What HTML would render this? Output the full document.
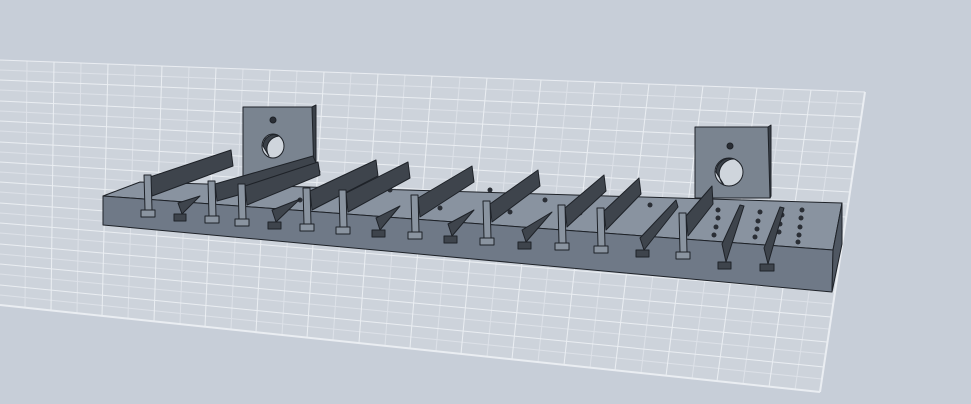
<!DOCTYPE html>
<html><head><meta charset="utf-8"><style>
html,body{margin:0;padding:0;background:#c7ced8;}
svg{display:block}
</style></head><body>
<svg width="971" height="404" viewBox="0 0 971 404" xmlns="http://www.w3.org/2000/svg">
<rect width="971" height="404" fill="#c7ced8"/>
<polygon points="0,60 865,92 820,392 0,305" fill="#cdd3db"/>
<g stroke="#e4e8ee" stroke-width="1" opacity="0.7">
<line x1="0" y1="70" x2="863" y2="104"/><line x1="0" y1="90" x2="859" y2="129"/>
<line x1="0" y1="111" x2="855" y2="154"/><line x1="0" y1="131" x2="852" y2="179"/>
<line x1="0" y1="152" x2="848" y2="204"/><line x1="0" y1="172" x2="844" y2="229"/>
<line x1="0" y1="192" x2="840" y2="254"/><line x1="0" y1="213" x2="837" y2="279"/>
<line x1="0" y1="233" x2="833" y2="304"/><line x1="0" y1="254" x2="829" y2="329"/>
<line x1="0" y1="274" x2="825" y2="354"/><line x1="0" y1="295" x2="822" y2="379"/>
<line x1="27" y1="61" x2="25" y2="307"/><line x1="81" y1="63" x2="77" y2="313"/>
<line x1="135" y1="65" x2="128" y2="318"/><line x1="189" y1="67" x2="180" y2="324"/>
<line x1="243" y1="69" x2="231" y2="329"/><line x1="297" y1="71" x2="282" y2="335"/>
<line x1="351" y1="73" x2="333" y2="340"/><line x1="405" y1="75" x2="385" y2="346"/>
<line x1="460" y1="77" x2="436" y2="351"/><line x1="514" y1="79" x2="487" y2="357"/>
<line x1="568" y1="81" x2="538" y2="362"/><line x1="622" y1="83" x2="590" y2="368"/>
<line x1="676" y1="85" x2="641" y2="373"/><line x1="730" y1="87" x2="692" y2="379"/>
<line x1="784" y1="89" x2="743" y2="384"/><line x1="838" y1="91" x2="795" y2="390"/>
</g>
<g stroke="#eef1f5" stroke-width="1" opacity="0.9">
<line x1="0" y1="60" x2="865" y2="92"/><line x1="0" y1="80" x2="861" y2="117"/>
<line x1="0" y1="101" x2="857" y2="142"/><line x1="0" y1="121" x2="854" y2="167"/>
<line x1="0" y1="142" x2="850" y2="192"/><line x1="0" y1="162" x2="846" y2="217"/>
<line x1="0" y1="182" x2="842" y2="242"/><line x1="0" y1="203" x2="839" y2="267"/>
<line x1="0" y1="223" x2="835" y2="292"/><line x1="0" y1="244" x2="831" y2="317"/>
<line x1="0" y1="264" x2="827" y2="342"/><line x1="0" y1="285" x2="824" y2="367"/>
<line x1="0" y1="305" x2="820" y2="392" stroke-width="2"/>
<line x1="54" y1="62" x2="51" y2="310"/><line x1="108" y1="64" x2="102" y2="316"/>
<line x1="162" y1="66" x2="154" y2="321"/><line x1="216" y1="68" x2="205" y2="327"/>
<line x1="270" y1="70" x2="256" y2="332"/><line x1="324" y1="72" x2="307" y2="338"/>
<line x1="378" y1="74" x2="359" y2="343"/><line x1="432" y1="76" x2="410" y2="348"/>
<line x1="487" y1="78" x2="461" y2="354"/><line x1="541" y1="80" x2="512" y2="359"/>
<line x1="595" y1="82" x2="564" y2="365"/><line x1="649" y1="84" x2="615" y2="370"/>
<line x1="703" y1="86" x2="666" y2="376"/><line x1="757" y1="88" x2="717" y2="381"/>
<line x1="811" y1="90" x2="769" y2="387"/><line x1="865" y1="92" x2="820" y2="392" stroke-width="2"/>
</g>
<g stroke="#1e2228" stroke-width="1" stroke-linejoin="round">
<polygon points="243,107 312,107 314,110 314,176 243,176" fill="#7a8490"/>
<polygon points="312,107 316,105 316,174 314,176" fill="#3a4048"/>
<circle cx="273" cy="120" r="3" fill="#2a2e35"/>
<ellipse cx="273" cy="146" rx="11" ry="12" fill="#cfd5dc"/>
<path d="M263,146 a11,12 0 0 1 16,-10 a13,13 0 0 0 -10,20 z" fill="#3a4048"/>
<polygon points="695,127 768,127 770,130 770,198 695,198" fill="#7a8490"/>
<polygon points="768,127 771,125 771,196 770,198" fill="#3a4048"/>
<circle cx="730" cy="146" r="3" fill="#2a2e35"/>
<ellipse cx="729" cy="172" rx="14" ry="14" fill="#cfd5dc"/>
<path d="M716,172 a14,14 0 0 1 18,-13 a15,15 0 0 0 -10,26 z" fill="#3a4048"/>
<polygon points="103,196 140,182 842,203 833,250" fill="#8993a0"/>
<polygon points="103,196 833,250 832,292 103,225" fill="#6f7987"/>
<polygon points="833,250 842,203 842,244 832,292" fill="#4f5762"/>
</g>
<g fill="#2a2e35">
<circle cx="300" cy="200" r="2.5"/><circle cx="390" cy="190" r="2.5"/><circle cx="420" cy="201" r="2.5"/>
<circle cx="440" cy="208" r="2.5"/><circle cx="490" cy="190" r="2.5"/><circle cx="510" cy="212" r="2.5"/>
<circle cx="545" cy="200" r="2.5"/><circle cx="580" cy="213" r="2.5"/><circle cx="650" cy="205" r="2.5"/>
<circle cx="718" cy="210" r="2.5"/><circle cx="718" cy="218" r="2.5"/><circle cx="716" cy="227" r="2.5"/><circle cx="714" cy="235" r="2.5"/>
<circle cx="760" cy="212" r="2.5"/><circle cx="758" cy="221" r="2.5"/><circle cx="757" cy="229" r="2.5"/><circle cx="755" cy="237" r="2.5"/>
<circle cx="802" cy="210" r="2.5"/><circle cx="801" cy="218" r="2.5"/><circle cx="800" cy="227" r="2.5"/><circle cx="799" cy="235" r="2.5"/><circle cx="798" cy="242" r="2.5"/>
<circle cx="782" cy="215" r="2.5"/><circle cx="780" cy="224" r="2.5"/><circle cx="779" cy="232" r="2.5"/>
</g>
<g stroke="#1e2228" stroke-width="1" stroke-linejoin="round">
<polygon points="150,177 231,150 233,166 152,196" fill="#3e444c"/><polygon points="144,175 151,175 152,210 145,210" fill="#8a94a0"/><polygon points="141,210 155,210 155,217 141,217" fill="#8a94a0"/>
<polygon points="215,184 313,156 320,172 217,201" fill="#3e444c"/><polygon points="208,181 215,181 216,216 209,216" fill="#8a94a0"/><polygon points="205,216 219,216 219,223 205,223" fill="#8a94a0"/>
<polygon points="245,186 318,162 320,175 247,205" fill="#3e444c"/><polygon points="238,184 245,184 246,219 239,219" fill="#8a94a0"/><polygon points="235,219 249,219 249,226 235,226" fill="#8a94a0"/>
<polygon points="310,191 376,160 378,176 312,210" fill="#3e444c"/><polygon points="303,188 310,188 311,224 304,224" fill="#8a94a0"/><polygon points="300,224 314,224 314,231 300,231" fill="#8a94a0"/>
<polygon points="346,193 408,162 410,178 348,212" fill="#3e444c"/><polygon points="339,190 346,190 347,227 340,227" fill="#8a94a0"/><polygon points="336,227 350,227 350,234 336,234" fill="#8a94a0"/>
<polygon points="418,198 472,166 474,182 420,217" fill="#3e444c"/><polygon points="411,195 418,195 419,232 412,232" fill="#8a94a0"/><polygon points="408,232 422,232 422,239 408,239" fill="#8a94a0"/>
<polygon points="490,204 538,170 540,186 492,222" fill="#3e444c"/><polygon points="483,201 490,201 491,238 484,238" fill="#8a94a0"/><polygon points="480,238 494,238 494,245 480,245" fill="#8a94a0"/>
<polygon points="565,208 604,175 606,191 567,227" fill="#3e444c"/><polygon points="558,205 565,205 566,243 559,243" fill="#8a94a0"/><polygon points="555,243 569,243 569,250 555,250" fill="#8a94a0"/>
<polygon points="604,211 639,178 641,194 606,230" fill="#3e444c"/><polygon points="597,208 604,208 605,246 598,246" fill="#8a94a0"/><polygon points="594,246 608,246 608,253 594,253" fill="#8a94a0"/>
<polygon points="686,216 712,186 713,204 688,236" fill="#3e444c"/><polygon points="679,213 686,213 687,252 680,252" fill="#8a94a0"/><polygon points="676,252 690,252 690,259 676,259" fill="#8a94a0"/>
<polygon points="178,203 200,196 182,214" fill="#3e444c"/><polygon points="174,214 186,214 186,221 174,221" fill="#3e444c"/>
<polygon points="272,210 300,199 276,222" fill="#3e444c"/><polygon points="268,222 281,222 281,229 268,229" fill="#3e444c"/>
<polygon points="376,218 400,206 380,230" fill="#3e444c"/><polygon points="372,230 385,230 385,237 372,237" fill="#3e444c"/>
<polygon points="448,224 474,210 452,236" fill="#3e444c"/><polygon points="444,236 457,236 457,243 444,243" fill="#3e444c"/>
<polygon points="522,230 552,212 526,242" fill="#3e444c"/><polygon points="518,242 531,242 531,249 518,249" fill="#3e444c"/>
<polygon points="640,238 676,200 678,207 644,250" fill="#3e444c"/><polygon points="636,250 649,250 649,257 636,257" fill="#3e444c"/>
<polygon points="722,244 740,205 744,206 726,262" fill="#3e444c"/><polygon points="718,262 731,262 731,269 718,269" fill="#3e444c"/>
<polygon points="764,248 780,207 784,208 768,264" fill="#3e444c"/><polygon points="760,264 774,264 774,271 760,271" fill="#3e444c"/>
</g>
</svg>
</body></html>
